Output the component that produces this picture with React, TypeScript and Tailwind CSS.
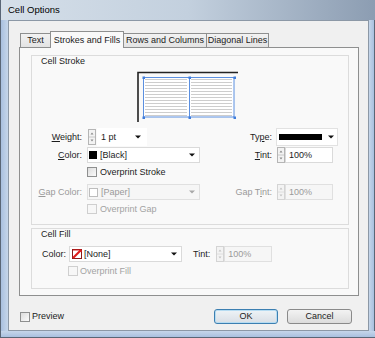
import React from "react";

const Arrow = ({ disabled }: { disabled?: boolean }) => (
  <svg width="6" height="4" viewBox="0 0 6 4" className="shrink-0">
    <path d="M0 0.5 L6 0.5 L3 3.5 Z" fill={disabled ? "#a8a8a8" : "#111"} />
  </svg>
);

const Spinner = ({ disabled }: { disabled?: boolean }) => (
  <svg width="8" height="16" viewBox="0 0 8 16" className="shrink-0">
    <rect x="0.5" y="0.5" width="7" height="15" fill="#f3f3f3" stroke={disabled ? "#d4d4d4" : "#b5b5b5"} />
    <line x1="1" y1="8" x2="7" y2="8" stroke={disabled ? "#dedede" : "#c8c8c8"} />
    <path d="M2.5 5.5 L5.5 5.5 L4 3.5 Z" fill={disabled ? "#c4c4c4" : "#8a8a8a"} />
    <path d="M2.5 10.5 L5.5 10.5 L4 12.5 Z" fill={disabled ? "#c4c4c4" : "#8a8a8a"} />
  </svg>
);

const Check = ({ disabled }: { disabled?: boolean }) => (
  <div
    className={
      disabled
        ? "w-[10px] h-[10px] border border-[#cfcfcf] bg-[#f7f7f7] shrink-0"
        : "w-[10px] h-[10px] border border-[#8e8f8f] bg-gradient-to-br from-[#dcdcdc] to-[#fbfbfb] shrink-0"
    }
  />
);

const Preview = () => {
  const lines = [];
  for (let y = 8; y <= 44; y += 3) lines.push(y);
  const handles = [
    [6, 6],
    [52, 6],
    [97, 6],
    [6, 46],
    [52, 46],
    [97, 46],
  ];
  return (
    <svg width="102" height="52" viewBox="0 0 102 52" className="ml-[105px] mt-[5px]">
      <rect x="6" y="6" width="91" height="40" fill="#fff" />
      {lines.map((y) => (
        <g key={y}>
          <line x1="8" y1={y + 0.5} x2="50" y2={y + 0.5} stroke="#cdcdcd" />
          <line x1="54" y1={y + 0.5} x2="95" y2={y + 0.5} stroke="#cdcdcd" />
        </g>
      ))}
      <path d="M1 51 L1 1.5 L101 1.5" fill="none" stroke="#222" strokeWidth="1.6" />
      <rect x="6.5" y="6.5" width="90.5" height="39.5" fill="none" stroke="#5a8fe0" />
      <line x1="52.5" y1="6" x2="52.5" y2="46" stroke="#5a8fe0" />
      {handles.map(([x, y]) => (
        <rect key={`${x}-${y}`} x={x - 0.5} y={y - 0.5} width="2.5" height="2.5" fill="#3f7ddc" />
      ))}
    </svg>
  );
};

const NoneSwatch = () => (
  <svg width="10" height="10" viewBox="0 0 10 10" className="shrink-0">
    <rect x="0.5" y="0.5" width="9" height="9" fill="#fff" stroke="#8a1a1a" />
    <path d="M1 9 L9 1" stroke="#e01b1b" strokeWidth="2.2" />
    <path d="M1 1 L9 1 L9 3" stroke="#d41a1a" strokeWidth="1.2" fill="none" />
  </svg>
);

export default function App() {
  return (
    <div className="w-[375px] h-[338px] flex flex-col overflow-hidden bg-[#b7cae3] border-l border-[#5a6676] font-['Liberation_Sans',Arial,sans-serif] text-[9px] leading-none text-[#1c1c1c]">
      {/* title bar */}
      <div className="h-[20px] shrink-0 flex items-center pl-[7px] bg-gradient-to-r from-[#d5dfe9] via-[#c3d0de] to-[#8c9db2] text-[9.5px] text-black">
        Cell Options
      </div>

      <div className="flex flex-1 min-h-0">
        <div className="w-[7px] shrink-0 bg-gradient-to-r from-[#a9c0df] to-[#c6d6ea]" />

        {/* client */}
        <div className="flex-1 flex flex-col border border-[#8c98a6] bg-[#f0f0f0]">
          {/* tabs */}
          <div className="h-[16px] mt-[10px] ml-[11px] flex items-end">
            <div className="w-[31px] h-[14px] border border-b-0 border-[#8e8f8f] bg-gradient-to-b from-[#f2f2f2] to-[#e3e3e3] flex items-center justify-center">
              Text
            </div>
            <div className="relative z-10 -mb-[1px] -ml-[1px] w-[74px] h-[17px] border border-b-0 border-[#8e8f8f] bg-[#f9f9f9] flex items-center justify-center">
              Strokes and Fills
            </div>
            <div className="-ml-[1px] w-[84px] h-[14px] border border-b-0 border-[#8e8f8f] bg-gradient-to-b from-[#f2f2f2] to-[#e3e3e3] flex items-center justify-center">
              Rows and Columns
            </div>
            <div className="-ml-[1px] w-[63px] h-[14px] border border-b-0 border-[#8e8f8f] bg-gradient-to-b from-[#f2f2f2] to-[#e3e3e3] flex items-center justify-center">
              Diagonal Lines
            </div>
          </div>

          {/* panel */}
          <div className="ml-[10px] w-[340px] h-[249px] border border-[#8e8f8f] bg-[#f9f9f9] pl-[11px] pt-[7px]">
            {/* Cell Stroke */}
            <div className="w-[318px] h-[170px] border border-[#dcdcdc] flex flex-col">
              <div className="ml-[9px] h-[10px] leading-[10px]">Cell Stroke</div>
              <Preview />

              <div className="mt-[5px] h-[18px] flex items-center">
                <div className="w-[50px] text-right">
                  <span className="underline">W</span>eight:
                </div>
                <div className="ml-[6px]">
                  <Spinner />
                </div>
                <div className="ml-[1px] w-[50px] h-[18px] bg-white flex items-center pl-[4px] pr-[6px] justify-between">
                  <span>1 pt</span>
                  <Arrow />
                </div>
                <div className="w-[72px] ml-[53px] text-right">
                  Ty<span className="underline">p</span>e:
                </div>
                <div className="ml-[4px] w-[62px] h-[18px] bg-white border border-[#e2e2e2] flex items-center pl-[2px] pr-[3px] justify-between">
                  <div className="w-[43px] h-[6px] bg-black" />
                  <Arrow />
                </div>
              </div>

              <div className="mt-[1px] h-[16px] flex items-center">
                <div className="w-[50px] text-right">
                  <span className="underline">C</span>olor:
                </div>
                <div className="ml-[5px] w-[113px] h-[16px] bg-white border border-[#dadada] flex items-center pl-[1px] pr-[4px]">
                  <div className="w-[8px] h-[8px] bg-black" />
                  <span className="ml-[3px]">[Black]</span>
                  <span className="ml-auto">
                    <Arrow />
                  </span>
                </div>
                <div className="w-[72px] text-right">
                  <span className="underline">T</span>int:
                </div>
                <div className="ml-[5px] flex items-center">
                  <Spinner />
                  <div className="w-[48px] h-[16px] bg-white border border-[#dadada] flex items-center pl-[3px]">
                    100%
                  </div>
                </div>
              </div>

              <div className="mt-[3px] h-[12px] flex items-center ml-[55px]">
                <Check />
                <span className="ml-[3px]">Overprint Stroke</span>
              </div>

              <div className="mt-[6px] h-[16px] flex items-center text-[#9a9a9a]">
                <div className="w-[50px] text-right">
                  <span className="underline">G</span>ap Color:
                </div>
                <div className="ml-[5px] w-[113px] h-[16px] bg-[#f6f6f6] border border-[#e0e0e0] flex items-center pl-[1px] pr-[4px]">
                  <div className="w-[9px] h-[9px] bg-white border border-[#bdbdbd]" />
                  <span className="ml-[3px]">[Paper]</span>
                  <span className="ml-auto">
                    <Arrow disabled />
                  </span>
                </div>
                <div className="w-[72px] text-right">
                  Gap T<span className="underline">i</span>nt:
                </div>
                <div className="ml-[5px] flex items-center">
                  <Spinner disabled />
                  <div className="w-[48px] h-[16px] bg-[#f6f6f6] border border-[#e0e0e0] flex items-center pl-[3px]">
                    100%
                  </div>
                </div>
              </div>

              <div className="mt-[3px] h-[12px] flex items-center ml-[55px] text-[#a3a3a3]">
                <Check disabled />
                <span className="ml-[3px]">Overprint Gap</span>
              </div>
            </div>

            {/* Cell Fill */}
            <div className="mt-[3px] w-[318px] h-[61px] border border-[#dcdcdc] flex flex-col">
              <div className="ml-[9px] h-[10px] leading-[10px]">Cell Fill</div>
              <div className="mt-[7px] h-[16px] flex items-center">
                <div className="w-[34px] text-right">Color:</div>
                <div className="ml-[3px] w-[113px] h-[16px] bg-white border border-[#dadada] flex items-center pl-[2px] pr-[4px]">
                  <NoneSwatch />
                  <span className="ml-[2px]">[None]</span>
                  <span className="ml-auto">
                    <Arrow />
                  </span>
                </div>
                <div className="ml-[11px]">Tint:</div>
                <div className="ml-[6px] flex items-center text-[#9a9a9a]">
                  <Spinner disabled />
                  <div className="w-[48px] h-[16px] bg-[#f6f6f6] border border-[#e0e0e0] flex items-center pl-[3px]">
                    100%
                  </div>
                </div>
              </div>
              <div className="mt-[3px] h-[12px] flex items-center ml-[36px] text-[#a3a3a3]">
                <Check disabled />
                <span className="ml-[2px]">Overprint Fill</span>
              </div>
            </div>
          </div>

          {/* bottom buttons */}
          <div className="mt-[13px] h-[15px] flex items-center ml-[11px] mr-[16px]">
            <Check />
            <span className="ml-[2px]">Preview</span>
            <button className="ml-auto w-[64px] h-[15px] rounded-[3px] border border-[#3c7fb1] bg-gradient-to-b from-[#eef3f7] to-[#d9dfe5] shadow-[inset_0_0_0_1px_#b6dcf2] flex items-center justify-center text-[9px] text-[#1c1c1c]">
              OK
            </button>
            <button className="ml-[9px] w-[65px] h-[15px] rounded-[3px] border border-[#8a8a8a] bg-gradient-to-b from-[#f3f3f3] to-[#dcdcdc] flex items-center justify-center text-[9px] text-[#1c1c1c]">
              Cancel
            </button>
          </div>
        </div>

        <div className="w-[6px] shrink-0 bg-gradient-to-r from-[#c6d6ea] to-[#a9c0df] border-r border-[#5a6676]" />
      </div>

      <div className="h-[7px] shrink-0 bg-gradient-to-b from-[#c6d6ea] to-[#a9c0df] border-b border-[#5a6676]" />
    </div>
  );
}
